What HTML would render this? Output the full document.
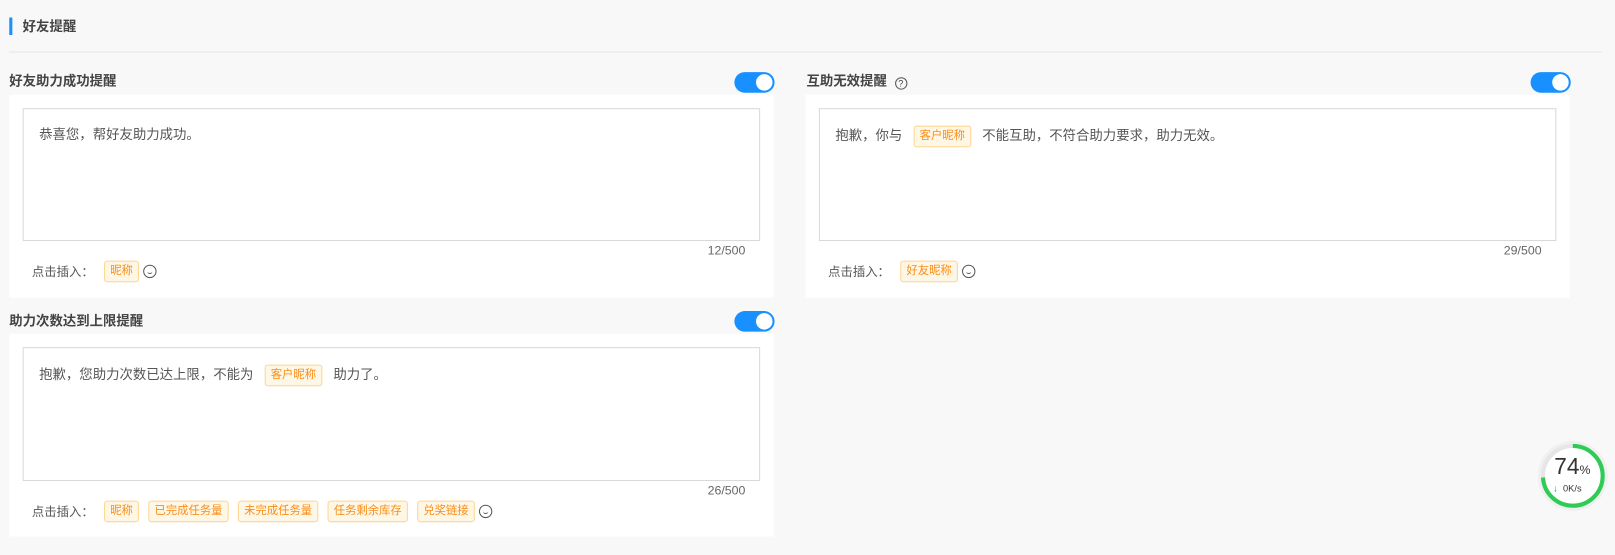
<!DOCTYPE html>
<html><head><meta charset="utf-8"><style>
*{box-sizing:border-box;margin:0;padding:0}
body{width:1615px;height:555px;background:#f8f8f8;font-family:"Liberation Sans","Noto Sans CJK SC",sans-serif;color:#333;position:relative;overflow:hidden;font-size:13px}
#w{position:absolute;left:0;top:0;width:1568px;height:539px;transform:scale(1.03);transform-origin:0 0}
.a{position:absolute}
.bar{left:9px;top:17px;width:3px;height:17px;background:#1890ff}
.hd{left:22px;top:17px;font-size:13px;font-weight:bold;color:#444;line-height:17px}
.line{left:9px;top:50px;width:1546px;height:1px;background:#e4e4e4}
.lbl{font-size:13px;font-weight:bold;color:#444;line-height:18px}
.tg{width:39px;height:20px;border-radius:10px;background:#1890ff}
.tg:after{content:"";position:absolute;right:2px;top:2px;width:16px;height:16px;border-radius:50%;background:#fff}
.box{background:#fff}
.ta{border:1px solid #d9d9d9;background:#fff}
.txt{font-size:13px;color:#555;line-height:22px;display:flex;align-items:center;white-space:nowrap}
.tag{display:inline-block;font-size:11px;color:#fa8c16;background:#fff7e6;border:1px solid #ffd591;border-radius:3px;height:21px;line-height:19px;padding:0 5px}
.cnt{font-size:12px;color:#666}
.ins{display:flex;align-items:center;font-size:12px;color:#555;white-space:nowrap}
.ins .tag{margin-right:9px}
.smile{width:13px;height:13px;border:1.3px solid #555;border-radius:50%;position:relative;margin-left:-5px}
.smile:after{content:"";position:absolute;left:2.5px;top:4px;width:5px;height:3px;border-bottom:1.3px solid #555;border-radius:0 0 4px 4px}
</style></head><body><div id="w">
<div class="a bar"></div><div class="a hd">好友提醒</div><div class="a line"></div>

<div class="a lbl" style="left:9px;top:70px">好友助力成功提醒</div>
<div class="a tg" style="left:713px;top:70px"></div>
<div class="a box" style="left:9px;top:92px;width:742px;height:197px"></div>
<div class="a ta" style="left:22px;top:105px;width:716px;height:129px"></div>
<div class="a txt" style="left:38px;top:120px">恭喜您，帮好友助力成功。</div>
<div class="a cnt" style="left:687px;top:236px">12/500</div>
<div class="a ins" style="left:31px;top:253px"><span style="margin-right:10px">点击插入：</span><span class="tag">昵称</span><span class="smile"></span></div>

<div class="a lbl" style="left:783px;top:70px">互助无效提醒 <span style="display:inline-block;width:12px;height:12px;border:1px solid #555;border-radius:50%;font-size:9px;line-height:10px;text-align:center;font-weight:normal;margin-left:4px;vertical-align:-1px">?</span></div>
<div class="a tg" style="left:1486px;top:70px"></div>
<div class="a box" style="left:782px;top:92px;width:742px;height:197px"></div>
<div class="a ta" style="left:795px;top:105px;width:716px;height:129px"></div>
<div class="a txt" style="left:811px;top:121px">抱歉，你与&nbsp;&nbsp;&nbsp;<span class="tag">客户昵称</span>&nbsp;&nbsp;&nbsp;不能互助，不符合助力要求，助力无效。</div>
<div class="a cnt" style="left:1460px;top:236px">29/500</div>
<div class="a ins" style="left:804px;top:253px"><span style="margin-right:10px">点击插入：</span><span class="tag">好友昵称</span><span class="smile"></span></div>

<div class="a lbl" style="left:9px;top:303px">助力次数达到上限提醒</div>
<div class="a tg" style="left:713px;top:302px"></div>
<div class="a box" style="left:9px;top:324px;width:742px;height:197px"></div>
<div class="a ta" style="left:22px;top:337px;width:716px;height:130px"></div>
<div class="a txt" style="left:38px;top:353px">抱歉，您助力次数已达上限，不能为&nbsp;&nbsp;&nbsp;<span class="tag">客户昵称</span>&nbsp;&nbsp;&nbsp;助力了。</div>
<div class="a cnt" style="left:687px;top:469px">26/500</div>
<div class="a ins" style="left:31px;top:486px"><span style="margin-right:10px">点击插入：</span><span class="tag">昵称</span><span class="tag">已完成任务量</span><span class="tag">未完成任务量</span><span class="tag">任务剩余库存</span><span class="tag">兑奖链接</span><span class="smile"></span></div>

<div class="a" style="left:1493px;top:428px;width:68px;height:68px;border-radius:50%;background:#f0f0f0"></div>
<svg class="a" style="left:1495px;top:430px" width="64" height="64"><circle cx="32" cy="32" r="29" fill="#fff" stroke="#e6e6e6" stroke-width="4"/><circle cx="32" cy="32" r="29" fill="none" stroke="#2ecc55" stroke-width="4" stroke-dasharray="134.8 182" transform="rotate(-90 32 32)"/></svg>
<div class="a" style="left:1509px;top:441px;font-size:22px;color:#333;line-height:24px">74<span style="font-size:12px">%</span></div>
<div class="a" style="left:1508px;top:469px;font-size:9px;color:#333"><span style="color:#1a9e3a">↓</span>&nbsp;&nbsp;0K/s</div>
</div></body></html>
